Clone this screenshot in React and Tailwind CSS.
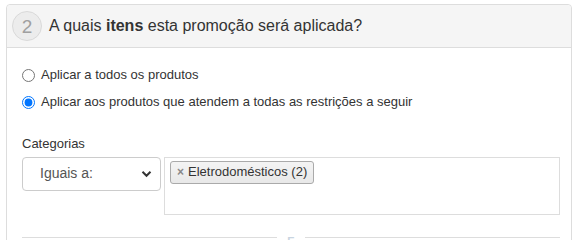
import React from "react";

const Step = ({ n }) => (
  <span className="flex items-center justify-center w-[30px] h-[30px] rounded-full bg-[#ececec] border border-[#d9d9d9] text-[#a0a0a0] text-[19px] leading-none">
    {n}
  </span>
);

export default function App() {
  return (
    <div className="w-[578px] h-[240px] overflow-hidden bg-white pt-[4px] px-[6px] text-[#333] font-['Liberation_Sans',Arial,sans-serif]">
      <div className="border border-[#dddddd] rounded-t-[4px] h-[260px]">
        {/* header */}
        <div className="flex items-center gap-[7px] h-[43px] px-[5px] bg-[#f5f5f5] border-b border-[#dddddd] rounded-t-[4px]">
          <Step n="2" />
          <h2 className="text-[16px]">
            A quais <b>itens</b> esta promoção será aplicada?
          </h2>
        </div>

        <div className="pl-[15px] pr-[12px] pt-[17px] text-[13px]">
          <label className="flex items-center gap-[6px] h-[20px]">
            <input type="radio" name="alvo" className="m-0 w-[13px] h-[13px]" />
            Aplicar a todos os produtos
          </label>
          <label className="flex items-center gap-[6px] h-[20px] mt-[7px]">
            <input type="radio" name="alvo" defaultChecked className="m-0 w-[13px] h-[13px]" />
            Aplicar aos produtos que atendem a todas as restrições a seguir
          </label>

          <div className="mt-[22px]">Categorias</div>
          <div className="flex gap-[3px] mt-[3px]">
            <div className="flex shrink-0 items-center justify-between w-[139px] h-[34px] border border-[#cccccc] rounded-[4px] pl-[17px] pr-[8px] text-[14px] text-[#555]">
              <span>Iguais a:</span>
              <svg width="11" height="8" viewBox="0 0 11 8">
                <path d="M1.5 1.8 L5.5 5.8 L9.5 1.8" fill="none" stroke="#333" strokeWidth="2" />
              </svg>
            </div>
            <div className="shrink-0 w-[396px] h-[58px] border border-[#dddddd] p-[3px] pl-[5px]">
              <span className="inline-flex items-center gap-[4px] h-[23px] px-[6px] rounded-[3px] border border-[#aaaaaa] bg-gradient-to-b from-[#f4f4f4] to-[#e8e8e8] text-[13px]">
                <span className="text-[#888] text-[12px] font-bold">×</span>
                Eletrodomésticos (2)
              </span>
            </div>
          </div>

          <div className="flex items-start gap-[10px] mt-[21px] w-[538px]">
            <div className="flex-1 border-t border-[#dddddd] mt-[1px]" />
            <span className="text-[11px] leading-none text-[#c8d4e0] font-bold">E</span>
            <div className="flex-1 border-t border-[#dddddd] mt-[1px]" />
          </div>
        </div>
      </div>
    </div>
  );
}
